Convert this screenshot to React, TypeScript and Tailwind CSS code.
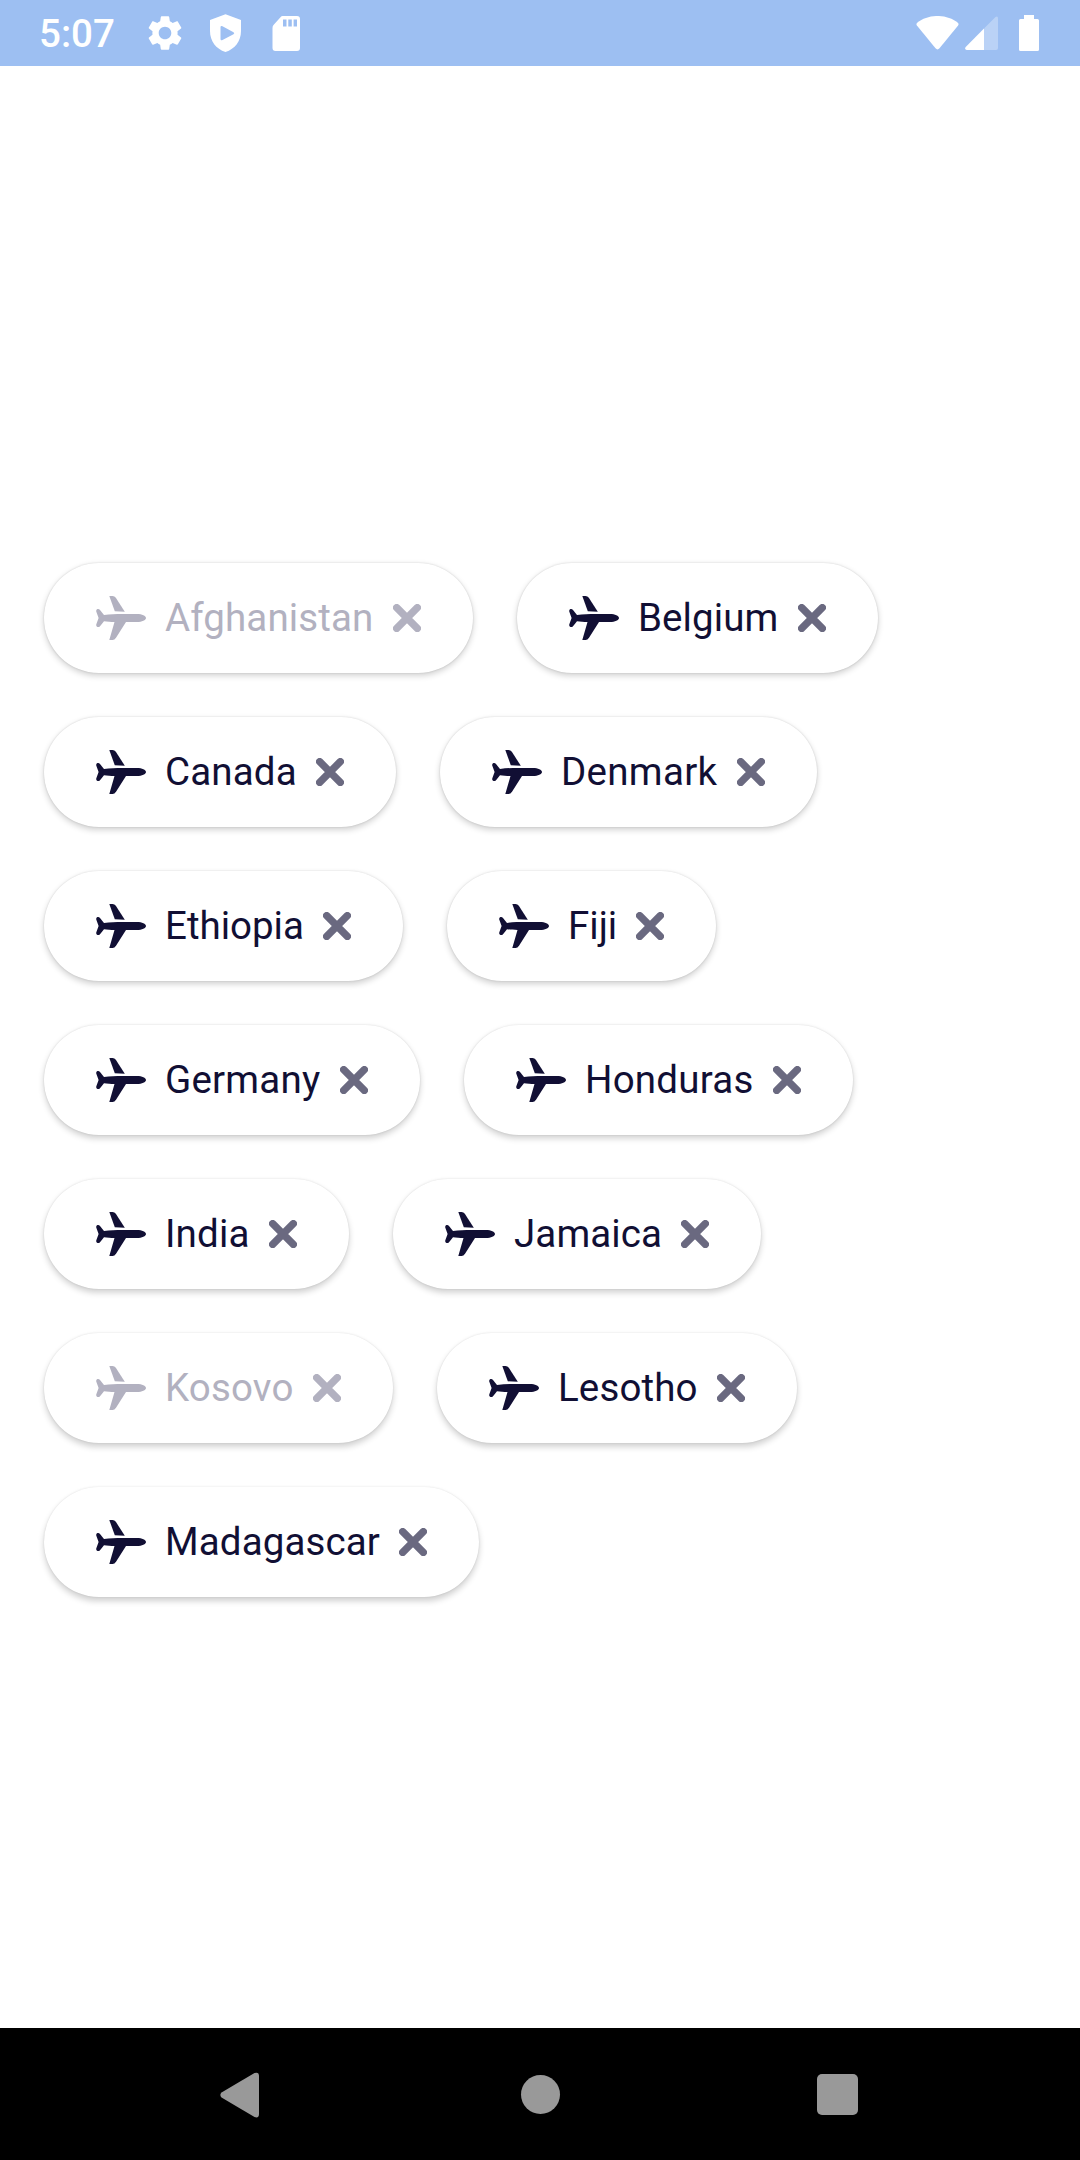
type Country = { name: string; width: number; tracking: number; disabled?: boolean };

const rows: Country[][] = [
  [
    { name: 'Afghanistan', width: 429, tracking: 0.12, disabled: true },
    { name: 'Belgium', width: 361, tracking: 0.1 },
  ],
  [
    { name: 'Canada', width: 352, tracking: 0.15 },
    { name: 'Denmark', width: 377, tracking: 0.3 },
  ],
  [
    { name: 'Ethiopia', width: 359, tracking: 0 },
    { name: 'Fiji', width: 269, tracking: 0 },
  ],
  [
    { name: 'Germany', width: 376, tracking: 0.22 },
    { name: 'Honduras', width: 389, tracking: 0.22 },
  ],
  [
    { name: 'India', width: 305, tracking: 0.15 },
    { name: 'Jamaica', width: 368, tracking: 0.1 },
  ],
  [
    { name: 'Kosovo', width: 349, tracking: 0.18, disabled: true },
    { name: 'Lesotho', width: 360, tracking: 0.12 },
  ],
  [{ name: 'Madagascar', width: 435, tracking: 0.12 }],
];

function Plane() {
  return (
    <svg className="h-[44px] w-[50px] shrink-0" viewBox="0 0 50 44" fill="currentColor">
      <path d="M13.3 0H16.5Q18.6 0 19.8 1.8L28.8 15.7L18.8 15.3Z" />
      <path d="M0.3 14.2C0.8 12.6 3 12.6 4 13.9L8 19C14 18 20 18 26 18H41C46 18 50 19.8 50 22C50 24.2 46 26 41 26H30L20 41.8Q18.6 44 16.5 44H13.3L18.5 26C15 26 11 25.7 8 25.2L4 30.2C3 31.4 0.8 31.4 0.3 29.8Q0 28.8 0.5 27.8L2.6 22L0.5 16.2Q0 15.2 0.3 14.2Z" />
    </svg>
  );
}

function Cross() {
  return (
    <svg className="h-[28px] w-[28px] shrink-0" viewBox="0 0 28 28" fill="none" stroke="currentColor" strokeWidth="7.400" strokeLinecap="round">
      <path d="M3.7 3.7L24.3 24.3M24.3 3.7L3.7 24.3" />
    </svg>
  );
}

function Chip({ name, width, tracking, disabled, row }: Country & { row: number }) {
  // The shadow falls further the lower a chip sits on the screen.
  const drop = 2.6 + row * 0.25;
  const boxShadow = `0 ${drop}px 6px rgba(0,0,0,0.19), 0 0 2px rgba(0,0,0,${0.15 - row * 0.008})`;
  return (
    <div
      className={`flex h-[110px] items-center rounded-full bg-white px-[52px] ${disabled ? 'text-[#b2b1c0]' : 'text-[#110f34]'}`}
      style={{ width, boxShadow }}
    >
      <Plane />
      <span className="ml-[19px] pb-[2px] text-[38.5px] leading-[45px] whitespace-nowrap" style={{ letterSpacing: tracking }}>
        {name}
      </span>
      <span className={`ml-auto ${disabled ? 'text-[#b2b1c0]' : 'text-[#6a6980]'}`}>
        <Cross />
      </span>
    </div>
  );
}

function StatusBar() {
  return (
    <header className="flex h-[66px] items-center bg-[#9dbff2] pr-[41px] pl-[39px] text-white">
      <span className="w-[109px] pt-[2px] text-[38.5px] leading-[64px] font-medium">5:07</span>
      <svg className="-ml-[4px] h-[42px] w-[42px]" viewBox="0 0 24 24" fill="currentColor">
        <path d="M19.14 12.94c.04-.3.06-.61.06-.94 0-.32-.02-.64-.07-.94l2.03-1.58c.18-.14.23-.41.12-.61l-1.92-3.32c-.12-.22-.37-.29-.59-.22l-2.39.96c-.5-.38-1.03-.7-1.62-.94l-.36-2.54c-.04-.24-.24-.41-.48-.41h-3.84c-.24 0-.43.17-.47.41l-.36 2.54c-.59.24-1.13.57-1.62.94l-2.39-.96c-.22-.08-.47 0-.59.22L2.74 8.87c-.12.21-.08.47.12.61l2.03 1.58c-.05.3-.09.63-.09.94s.02.64.07.94l-2.03 1.58c-.18.14-.23.41-.12.61l1.92 3.32c.12.22.37.29.59.22l2.39-.96c.5.38 1.03.7 1.62.94l.36 2.54c.05.24.24.41.48.41h3.84c.24 0 .44-.17.47-.41l.36-2.54c.59-.24 1.13-.56 1.62-.94l2.39.96c.22.08.47 0 .59-.22l1.92-3.32c.12-.22.07-.47-.12-.61l-2.01-1.58zM12 15.6c-1.98 0-3.6-1.62-3.6-3.6s1.62-3.6 3.6-3.6 3.6 1.62 3.6 3.6-1.62 3.6-3.6 3.6z" />
      </svg>
      <svg className="ml-[24px] h-[38px] w-[31px]" viewBox="0 0 31 38" fill="currentColor" fillRule="evenodd">
        <path d="M15.500 .3L31 6V17C31 27 25 35 15.500 38C6 35 0 27 0 17V6ZM10.500 13.300V25Q10.500 27 12.500 26L23.500 20.300Q25 19.300 23.500 18.300L12.500 12.300Q10.500 11.300 10.500 13.300Z" />
      </svg>
      <svg className="ml-[31px] h-[35px] w-[28px]" viewBox="0 0 28 35" fill="currentColor" fillRule="evenodd">
        <path d="M10.500 0H25Q28 0 28 3V32Q28 35 25 35H3.500Q.5 35 .5 32V12Q.5 10 1.500 9L8.500 1.200Q9.500 0 10.500 0ZM11 3.500V10.500H14.500V3.500ZM16.300 3.500V10.500H19.800V3.500ZM21.600 3.500V10.500H25V3.500Z" />
      </svg>
      <svg className="ml-auto h-[34px] w-[43px]" viewBox="0 0 43 34" fill="currentColor">
        <path d="M1.200 6.800C12 -2.300 31 -2.300 41.800 6.800Q43.200 8 42.100 9.500L23.500 32.300Q21.500 34.500 19.500 32.300L.9 9.500Q-.2 8 1.200 6.800Z" />
      </svg>
      <svg className="ml-[6px] h-[34px] w-[33px]" viewBox="0 0 33 34" fill="currentColor">
        <path opacity=".3" d="M19 12.500L30.500 1Q33 -.5 33 2.500V32Q33 34 31 34H19Z" />
        <path d="M19 12.500V34H1.800Q-.8 33.500 .7 31Z" />
      </svg>
      <svg className="ml-[21px] h-[36px] w-[20px]" viewBox="0 0 20 36" fill="currentColor">
        <path d="M5 0H15V4H18.500Q20 4 20 5.500V34.500Q20 36 18.500 36H1.500Q0 36 0 34.500V5.500Q0 4 1.500 4H5Z" />
      </svg>
    </header>
  );
}

function NavigationBar() {
  return (
    <nav className="flex h-[132px] items-center bg-black pt-px pl-[220px] text-[#999999]">
      <svg className="h-[46px] w-[39px]" viewBox="0 0 39 46" fill="currentColor">
        <path d="M1.500 20.600L34.500 1Q39 -.5 39 4V42Q39 46.500 34.500 45L1.500 25.400Q-.8 23 1.500 20.600Z" />
      </svg>
      <span className="ml-[262px] h-[39px] w-[39px] rounded-full bg-[#999999]" />
      <span className="ml-[257px] h-[41px] w-[41px] rounded-[5px] bg-[#999999]" />
    </nav>
  );
}

export default function App() {
  return (
    <div className="flex h-[2160px] w-[1080px] flex-col bg-white font-['Roboto',sans-serif]">
      <StatusBar />
      <main className="flex flex-1 flex-col gap-[44px] pt-[497px] pl-[44px]">
        {rows.map((row, index) => (
          <div key={row[0].name} className="flex gap-[44px]">
            {row.map((chip) => (
              <Chip key={chip.name} {...chip} row={index} />
            ))}
          </div>
        ))}
      </main>
      <NavigationBar />
    </div>
  );
}
